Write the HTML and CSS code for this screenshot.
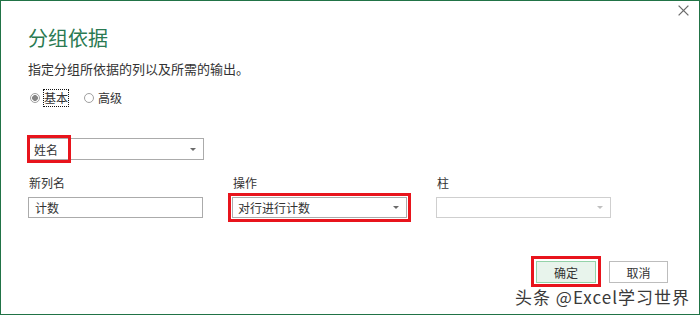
FILE: index.html
```html
<!DOCTYPE html>
<html lang="zh-CN">
<head>
<meta charset="utf-8">
<title>分组依据</title>
<link rel="stylesheet" href="styles.css">
</head>
<body>
<div class="dialog">
  <span class="close" aria-label="关闭"><svg width="11" height="11" viewBox="0 0 11 11"><path d="M0.6 0.6L10.4 10.4M10.4 0.6L0.6 10.4" stroke="#6b6b6b" stroke-width="1.3" fill="none"/></svg></span>
  <h1 class="title">分组依据</h1>
  <p class="desc">指定分组所依据的列以及所需的输出。</p>
  <div class="radios">
    <label class="radio"><span class="dot checked"></span><span class="rlabel focus">基本</span></label>
    <label class="radio second"><span class="dot"></span><span class="rlabel">高级</span></label>
  </div>
  <div class="groupby">
    <div class="select"><span>姓名</span><span class="arrow"></span></div>
    <div class="hl hl-name"></div>
  </div>
  <div class="fields">
    <div class="field">
      <div class="flabel">新列名</div>
      <div class="input">计数</div>
    </div>
    <div class="field">
      <div class="flabel">操作</div>
      <div class="wrap">
        <div class="select short"><span>对行进行计数</span><span class="arrow"></span></div>
        <div class="hl hl-op"></div>
      </div>
    </div>
    <div class="field">
      <div class="flabel">柱</div>
      <div class="select short disabled"><span></span><span class="arrow light"></span></div>
    </div>
  </div>
  <div class="buttons">
    <div class="wrap">
      <button class="btn primary">确定</button>
      <div class="hl hl-ok"></div>
    </div>
    <button class="btn cancel">取消</button>
  </div>
  <div class="watermark">头条 @Excel学习世界</div>
</div>
</body>
</html>
```
FILE: styles.css
```css
html, body {
  margin: 0;
  padding: 0;
  background: #fff;
}
body {
  font-family: "Noto Sans CJK SC", "Microsoft YaHei", sans-serif;
  color: #333;
}
.dialog {
  position: relative;
  width: 700px;
  height: 315px;
  box-sizing: border-box;
  border: 1px solid #217346;
  padding: 25px 31px 0 27px;
  background: #fff;
}
.close {
  position: absolute;
  top: 4px;
  right: 10px;
  width: 11px;
  height: 11px;
  display: block;
}
.close svg { display: block; }
.title {
  margin: 0;
  font-size: 20px;
  line-height: 24px;
  font-weight: normal;
  color: #2a7a52;
}
.desc {
  margin: 10px 0 0;
  font-size: 13px;
  line-height: 17px;
  color: #333;
}
.radios {
  margin-top: 12px;
  height: 18px;
  display: flex;
  align-items: center;
  padding-left: 2px;
}
.radio {
  display: flex;
  align-items: center;
}
.radio.second { margin-left: 15px; }
.dot {
  width: 10px;
  height: 10px;
  box-sizing: border-box;
  border: 1px solid #a0a0a0;
  border-radius: 50%;
  margin-right: 3px;
  background: #fff;
}
.dot.checked {
  background: radial-gradient(circle, #858585 0 2.6px, #fff 3.2px);
}
.rlabel {
  font-size: 12px;
  line-height: 16px;
  border: 1px dotted transparent;
  color: #333;
}
.rlabel.focus { border-color: #111; }
.groupby {
  position: relative;
  width: 176px;
  margin-top: 31px;
}
.select {
  height: 22px;
  box-sizing: border-box;
  border: 1px solid #ababab;
  background: #fff;
  display: flex;
  align-items: center;
  justify-content: space-between;
  padding: 0 7px 0 5px;
  font-size: 12px;
  color: #333;
}
.select.short { height: 21px; }
.select.disabled { border-color: #cfcfcf; }
.arrow {
  width: 0;
  height: 0;
  border-left: 3px solid transparent;
  border-right: 3px solid transparent;
  border-top: 3px solid #6a6a6a;
}
.arrow.light { border-top-color: #c0c0c0; }
.hl {
  position: absolute;
  box-sizing: border-box;
  border: 3px solid #e8141c;
  pointer-events: none;
}
.hl-name {
  left: -1px;
  top: -3px;
  width: 44px;
  height: 28px;
}
.fields {
  display: grid;
  grid-template-columns: 175px 175px 175px;
  column-gap: 29px;
  margin-top: 15px;
}
.flabel {
  font-size: 12px;
  line-height: 16px;
  color: #333;
  margin-bottom: 6px;
  padding-left: 1px;
}
.input {
  height: 21px;
  box-sizing: border-box;
  border: 1px solid #ababab;
  padding: 0 6px;
  font-size: 12px;
  display: flex;
  align-items: center;
  color: #333;
}
.wrap { position: relative; }
.hl-op {
  left: -4px;
  top: -4px;
  right: -4px;
  bottom: -4px;
}
.buttons {
  display: flex;
  justify-content: flex-end;
  gap: 13px;
  margin-top: 43px;
}
.btn {
  display: block;
  width: 60px;
  height: 22px;
  box-sizing: border-box;
  border: 1px solid #bdbdbd;
  background: #fff;
  font-family: inherit;
  font-size: 12px;
  color: #333;
  padding: 0;
  margin: 0;
}
.btn.cancel { width: 59px; }
.btn.primary {
  background: #e8f4ec;
  border-color: #94d2a9;
}
.hl-ok {
  left: -5px;
  top: -5px;
  right: -5px;
  bottom: -4px;
}
.watermark {
  position: absolute;
  top: 286px;
  right: 9px;
  font-size: 17px;
  line-height: 20px;
  letter-spacing: 1px;
  color: #3a3a3a;
  text-shadow: 0 0 1px #fff, 1px 1px 0 #fff, -1px -1px 0 #fff;
  white-space: nowrap;
}
```
